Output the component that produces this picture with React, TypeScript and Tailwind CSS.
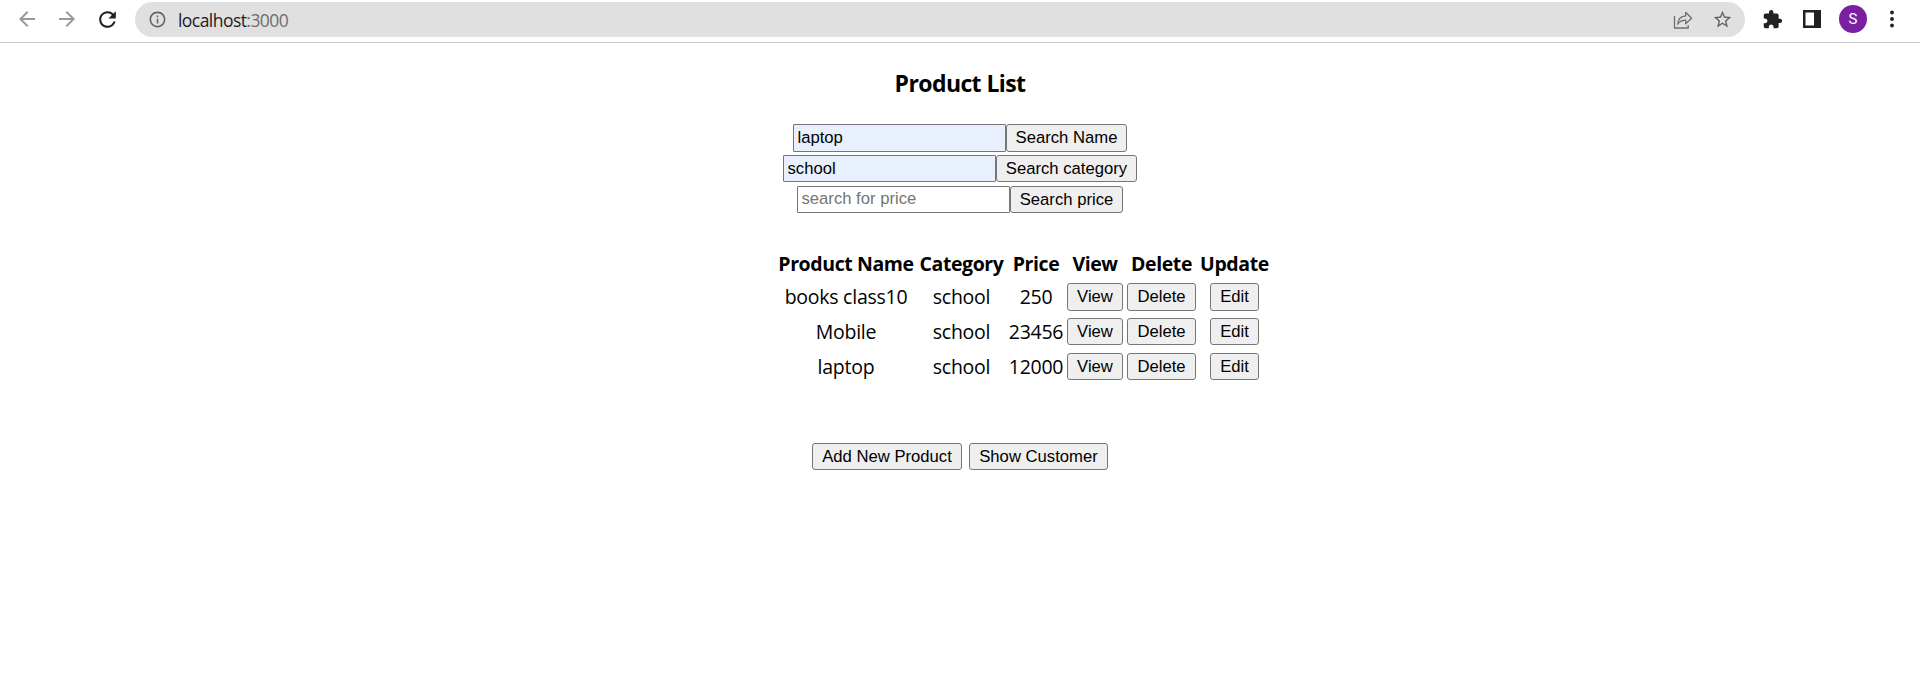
import React from 'react';
import { MdArrowBack, MdArrowForward, MdRefresh, MdInfoOutline, MdStarBorder, MdExtension } from 'react-icons/md';

const products = [
  { name: 'books class10', category: 'school', price: 250, button: 'h-[28px]' },
  { name: 'Mobile', category: 'school', price: 23456, button: 'h-[27px]' },
  { name: 'laptop', category: 'school', price: 12000, button: 'h-[27px]' },
];

const control = "font-['Liberation_Sans',Arial,sans-serif] text-[16.667px] leading-[19px] text-black border border-[#767676]";

function Button({ children, className = '' }: { children: React.ReactNode; className?: string }) {
  return (
    <button
      className={`${control} shrink-0 rounded-[3px] bg-[#efefef] p-0 pb-px text-center whitespace-nowrap ${className}`}
    >
      {children}
    </button>
  );
}

function SearchRow({ value, placeholder, label, height, input, button }: {
  value?: string; placeholder?: string; label: string; height: string; input: string; button: string;
}) {
  return (
    <div className={`flex justify-center ${height}`}>
      <input
        defaultValue={value}
        placeholder={placeholder}
        className={`${control} h-full w-[213px] rounded-[1px] pr-[3px] pl-[3.5px] outline-none placeholder:text-[#757575] ${input}`}
      />
      <Button className={`h-full ${button}`}>{label}</Button>
    </div>
  );
}

function Toolbar() {
  return (
    <header className="flex h-[43px] items-start border-b border-[#c8c8c8] bg-white">
      <div className="flex h-[38px] items-center gap-4 pl-[15px]">
        <MdArrowBack size={24} className="text-[#97999b]" />
        <MdArrowForward size={24} className="text-[#97999b]" />
        <MdRefresh size={25} className="text-[#202124]" />
      </div>
      <div className="mt-[2px] ml-[15px] flex h-[35px] w-[1610px] items-center rounded-full bg-[#e0e0e0] pr-[12px] pl-[13px]">
        <MdInfoOutline size={19} className="text-[#5f6368]" />
        <span className="ml-[11px] grow font-['Open_Sans','Noto_Sans',sans-serif] text-[17.5px] leading-6 tracking-[-0.55px] text-[#202124]">
          localhost<span className="text-[#6b6e72]">:3000</span>
        </span>
        <svg width="20" height="20" viewBox="0 0 20 20" fill="none" stroke="#6b6e72" strokeWidth="1.3" className="mr-[19px]">
          <path d="M1.5 6v12h13.7v-3" />
          <path d="M4.7 14.2c.3-5.5 3.1-8 8-8.3V2.3l5.9 5.9-5.9 5.5v-3.5c-3.5 0-5.8 1-8 4z" strokeLinejoin="round" />
        </svg>
        <MdStarBorder size={21} className="text-[#5f6368]" />
      </div>
      <div className="flex h-[38px] items-center pl-[17px] text-[#202124]">
        <MdExtension size={21} />
        <svg width="18" height="18" viewBox="0 0 18 18" className="ml-[20px]">
          <path fill="#202124" fillRule="evenodd" d="M0 0h18v18H0zM2.5 2.5v13H11v-13z" />
        </svg>
        <div className="ml-[18px] flex size-7 items-center justify-center rounded-full bg-[#7b1fa2] font-[Roboto,sans-serif] text-[15px] text-white">
          S
        </div>
        <svg width="6" height="18" viewBox="0 0 6 18" fill="#202124" className="ml-[22px]">
          <circle cx="3" cy="2.5" r="1.9" />
          <circle cx="3" cy="9" r="1.9" />
          <circle cx="3" cy="15.5" r="1.9" />
        </svg>
      </div>
    </header>
  );
}

export default function App() {
  return (
    <div className="h-[700px] overflow-hidden bg-white font-['Open_Sans','Noto_Sans',sans-serif] text-black">
      <Toolbar />
      <main className="flex flex-col items-center">
        <h3 className="mt-[24px] h-8 text-[23px] leading-8 font-bold tracking-[-0.6px]">Product List</h3>
        <section className="mt-[25px] flex flex-col items-center gap-[3px]">
          <SearchRow value="laptop" label="Search Name" height="h-[28px]" input="bg-[#e8f0fe]" button="w-[121px]" />
          <SearchRow value="school" label="Search category" height="h-[27px]" input="bg-[#e8f0fe]" button="w-[141px]" />
          <div className="pt-px">
            <SearchRow placeholder="search for price" label="Search price" height="h-[27px]" input="bg-white pb-px" button="w-[113px]" />
          </div>
        </section>
        <table className="mt-[35px] ml-[127px] w-[495px] table-fixed border-collapse text-center text-[19.5px] leading-[26px] tracking-[-0.25px]">
          <colgroup>
            <col className="w-[140px]" />
            <col className="w-[91px]" />
            <col className="w-[58px]" />
            <col className="w-[60px]" />
            <col className="w-[73px]" />
            <col className="w-[73px]" />
          </colgroup>
          <thead>
            <tr className="h-[31px] text-[19.5px] font-bold tracking-[-0.4px] whitespace-nowrap">
              <th className="p-0">Product Name</th>
              <th className="p-0">Category</th>
              <th className="p-0">Price</th>
              <th className="p-0">View</th>
              <th className="p-0">Delete</th>
              <th className="p-0">Update</th>
            </tr>
          </thead>
          <tbody>
            {products.map((p) => (
              <tr key={p.name} className="h-[35px] whitespace-nowrap">
                <td className="p-0 pt-px">{p.name}</td>
                <td className="p-0 pt-px">{p.category}</td>
                <td className="p-0 pt-px">{p.price}</td>
                <td className="p-0"><Button className={`mx-auto block w-[56px] tracking-normal ${p.button}`}>View</Button></td>
                <td className="p-0"><Button className={`mx-auto block w-[69px] tracking-normal ${p.button}`}>Delete</Button></td>
                <td className="p-0"><Button className={`mx-auto block w-[49px] tracking-normal ${p.button}`}>Edit</Button></td>
              </tr>
            ))}
          </tbody>
        </table>
        <div className="mt-[59px] flex gap-[7px]">
          <Button className="h-[27px] w-[150px]">Add New Product</Button>
          <Button className="h-[27px] w-[139px]">Show Customer</Button>
        </div>
      </main>
    </div>
  );
}
